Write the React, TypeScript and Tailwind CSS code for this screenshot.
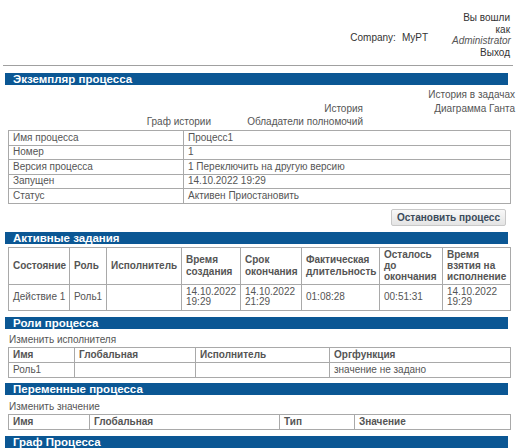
import React from "react";

const FONT = { fontFamily: '"Liberation Sans", Arial, sans-serif' };

function Bar({ title }: { title: string }) {
  return (
    <div className="h-[12px] bg-[#0b5794] pl-[8px] text-[11.5px] font-bold leading-[12px] text-white">
      {title}
    </div>
  );
}

const cell = "border border-[#a9a9a9] px-[4px] align-middle";

const INFO: [string, string][] = [
  ["Имя процесса", "Процесс1"],
  ["Номер", "1"],
  ["Версия процесса", "1 Переключить на другую версию"],
  ["Запущен", "14.10.2022 19:29"],
  ["Статус", "Активен Приостановить"],
];

const TASK_COLS = [
  { w: 61, h: "Состояние", v: "Действие 1" },
  { w: 37, h: "Роль", v: "Роль1" },
  { w: 75, h: "Исполнитель", v: "" },
  { w: 59, h: "Время создания", v: "14.10.2022 19:29" },
  { w: 61, h: "Срок окончания", v: "14.10.2022 21:29" },
  { w: 78, h: "Фактическая длительность", v: "01:08:28" },
  { w: 63, h: "Осталось до окончания", v: "00:51:31" },
  { w: 68, h: "Время взятия на исполнение", v: "14.10.2022 19:29" },
];

function SimpleTable({
  cols,
  rows,
}: {
  cols: { w: number; h: string }[];
  rows: string[][];
}) {
  return (
    <table className="mx-[3px] w-[502px] table-fixed border-collapse">
      <colgroup>
        {cols.map((c) => (
          <col key={c.h} style={{ width: c.w }} />
        ))}
      </colgroup>
      <tbody>
        <tr>
          {cols.map((c) => (
            <td key={c.h} className={`${cell} h-[15px] font-bold leading-[13px]`}>
              {c.h}
            </td>
          ))}
        </tr>
        {rows.map((r, i) => (
          <tr key={i}>
            {r.map((v, j) => (
              <td key={j} className={`${cell} h-[15px] leading-[13px]`}>
                {v}
              </td>
            ))}
          </tr>
        ))}
      </tbody>
    </table>
  );
}

export default function App() {
  return (
    <div className="h-[448px] overflow-hidden bg-white text-[10px] text-[#555]" style={FONT}>
      {/* top bar */}
      <div className="flex h-[65px] items-start justify-end pr-[14px] pt-[12px] text-[#333]">
        <div className="mt-[20px] flex gap-[6px] leading-[12px]">
          <span>Company:</span>
          <span>MyPT</span>
        </div>
        <div className="ml-[24px] w-[58px] text-right leading-[11.5px]">
          Вы вошли как
          <div className="italic text-[#555]">Administrator</div>
          <div>Выход</div>
        </div>
      </div>
      <div className="mx-[3px] h-[2px] w-[510px] border-t border-[#a0a0a0] border-b-[#e6e6e6]" />

      <div className="w-[508px] pl-[5px] pt-[6px]">
        <Bar title="Экземпляр процесса" />

        {/* links */}
        <div className="mt-[3px] grid grid-cols-[206px_152px_152px] grid-rows-[14px_13px_13px] text-right leading-[13px]">
          <span className="col-start-3 row-start-1">История в задачах</span>
          <span className="col-start-2 row-start-2">История</span>
          <span className="col-start-3 row-start-2">Диаграмма Ганта</span>
          <span className="col-start-1 row-start-3">Граф истории</span>
          <span className="col-start-2 row-start-3">Обладатели полномочий</span>
        </div>

        <table className="ml-[3px] mt-[2px] w-[503px] table-fixed border-collapse">
          <colgroup>
            <col className="w-[175px]" />
            <col />
          </colgroup>
          <tbody>
            {INFO.map(([k, v]) => (
              <tr key={k}>
                <td className={`${cell} h-[14.5px] leading-[12px]`}>{k}</td>
                <td className={`${cell} h-[14.5px] leading-[12px]`}>{v}</td>
              </tr>
            ))}
          </tbody>
        </table>

        <div className="mt-[5px] flex justify-end pr-[2px]">
          <button className="h-[17px] whitespace-nowrap rounded-[2px] border border-[#c8c8c8] bg-gradient-to-b from-[#f8f8f8] to-[#e4e4e4] px-[5px] text-[10px] font-bold leading-[15px] text-[#3a4a5a]">
            Остановить процесс
          </button>
        </div>

        <div className="mt-[6px]">
          <Bar title="Активные задания" />
        </div>
        <table className="mx-[3px] mt-[3px] w-[502px] table-fixed border-collapse">
          <colgroup>
            {TASK_COLS.map((c) => (
              <col key={c.h} style={{ width: c.w }} />
            ))}
          </colgroup>
          <tbody>
            <tr>
              {TASK_COLS.map((c) => (
                <td key={c.h} className={`${cell} h-[37px] font-bold leading-[11.3px]`}>
                  {c.h}
                </td>
              ))}
            </tr>
            <tr>
              {TASK_COLS.map((c, i) => (
                <td
                  key={c.h}
                  className={`${cell} h-[26px] leading-[10.5px] ${i === 0 ? "whitespace-nowrap" : ""}`}
                >
                  {c.v}
                </td>
              ))}
            </tr>
          </tbody>
        </table>

        <div className="mt-[6px]">
          <Bar title="Роли процесса" />
        </div>
        <div className="pl-[4px] pt-[4px] leading-[14px]">Изменить исполнителя</div>
        <SimpleTable
          cols={[
            { w: 66, h: "Имя" },
            { w: 121, h: "Глобальная" },
            { w: 134, h: "Исполнитель" },
            { w: 181, h: "Оргфункция" },
          ]}
          rows={[["Роль1", "", "", "значение не задано"]]}
        />

        <div className="mt-[5px]">
          <Bar title="Переменные процесса" />
        </div>
        <div className="pl-[4px] pt-[5px] leading-[14px]">Изменить значение</div>
        <SimpleTable
          cols={[
            { w: 81, h: "Имя" },
            { w: 190, h: "Глобальная" },
            { w: 75, h: "Тип" },
            { w: 156, h: "Значение" },
          ]}
          rows={[]}
        />

        <div className="mt-[6px]">
          <Bar title="Граф Процесса" />
        </div>
      </div>
    </div>
  );
}
